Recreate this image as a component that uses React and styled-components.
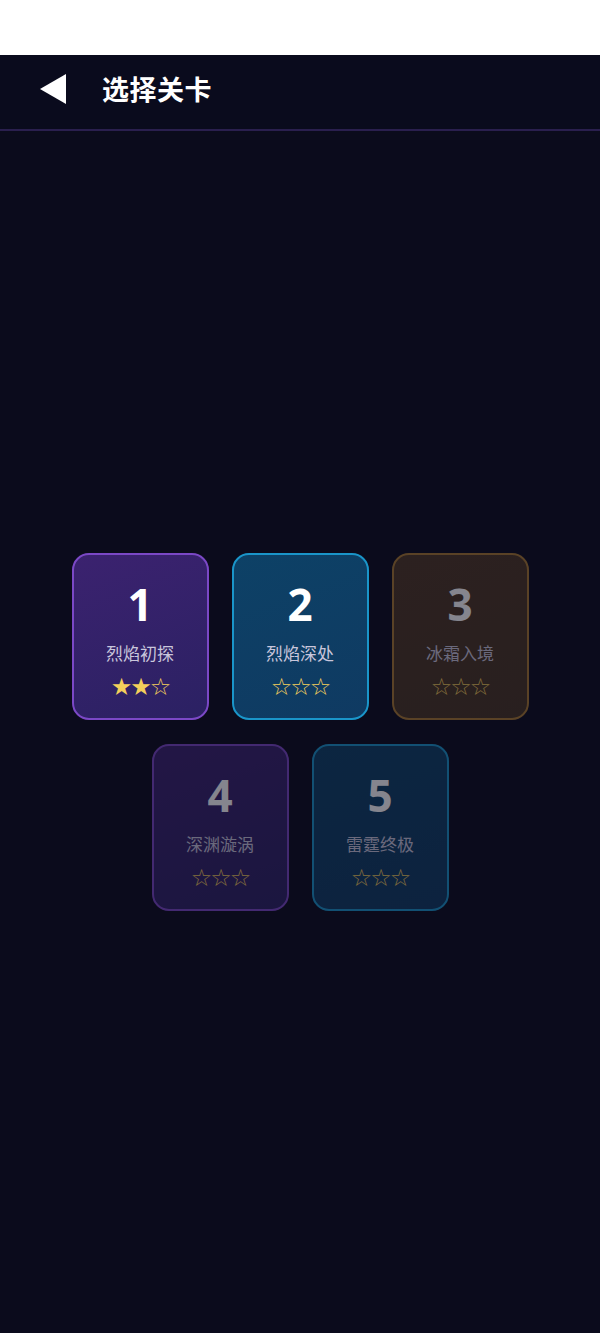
import React from 'react';
import styled, { createGlobalStyle } from 'styled-components';

const GlobalStyle = createGlobalStyle`
  html, body {
    margin: 0;
    padding: 0;
    background: #ffffff;
  }
  body {
    font-family: 'Noto Sans', 'Noto Sans CJK SC', sans-serif;
  }
`;

const Page = styled.div`
  padding-top: 55px;
  min-height: 1333px;
  box-sizing: border-box;
  display: flex;
  flex-direction: column;
`;

const Header = styled.div`
  height: 76px;
  box-sizing: border-box;
  display: flex;
  align-items: center;
  background: #0a0b1d;
  border-bottom: 2px solid #2a1f4e;
  padding: 0 0 8px 40px;
  gap: 36px;
`;

const BackIcon = styled.svg`
  width: 26px;
  height: 30px;
  display: block;
  margin-top: 2px;
`;

const Title = styled.h1`
  margin: 0;
  color: #ffffff;
  font-size: 27px;
  font-weight: 700;
  font-family: 'Noto Sans CJK SC', sans-serif;
  letter-spacing: 0.5px;
`;

const Main = styled.div`
  flex: 1;
  background: #0b0b1c;
  display: flex;
  align-items: center;
  justify-content: center;
`;

const Grid = styled.div`
  display: flex;
  flex-wrap: wrap;
  justify-content: center;
  width: 462px;
  column-gap: 23px;
  row-gap: 24px;
`;

const themes = {
  purple: { bg: 'linear-gradient(160deg, #3b226f 0%, #2b2163 100%)', border: '#7b48c6' },
  blue: { bg: 'linear-gradient(160deg, #0d4166 0%, #0f3a62 100%)', border: '#1a95c9' },
  brown: { bg: 'linear-gradient(160deg, #4e3724 0%, #463422 100%)', border: '#a87a30' },
};

const Card = styled.div`
  width: 137px;
  height: 167px;
  box-sizing: border-box;
  border-radius: 17px;
  border: 2.5px solid ${p => themes[p.$tone].border};
  background: ${p => themes[p.$tone].bg};
  opacity: ${p => (p.$locked ? 0.5 : 1)};
  display: flex;
  flex-direction: column;
  align-items: center;
  padding-top: 23px;
`;

const Num = styled.div`
  color: #ffffff;
  font-size: 44px;
  font-weight: 700;
  line-height: 52px;
  font-family: 'Noto Sans', 'Noto Sans CJK SC', sans-serif;
`;

const Name = styled.div`
  margin-top: 12px;
  color: #c9c6dc;
  font-size: 17px;
  line-height: 22px;
  font-family: 'Noto Sans CJK SC', sans-serif;
`;

const Stars = styled.div`
  margin-top: 10px;
  color: #f4cf5b;
  font-size: 24px;
  line-height: 26px;
  letter-spacing: -2px;
  font-family: 'DejaVu Sans', sans-serif;
`;

const levels = [
  { n: 1, name: '烈焰初探', tone: 'purple', stars: 2, locked: false },
  { n: 2, name: '烈焰深处', tone: 'blue', stars: 0, locked: false },
  { n: 3, name: '冰霜入境', tone: 'brown', stars: 0, locked: true },
  { n: 4, name: '深渊漩涡', tone: 'purple', stars: 0, locked: true },
  { n: 5, name: '雷霆终极', tone: 'blue', stars: 0, locked: true },
];

export default function App() {
  return (
    <>
      <GlobalStyle />
      <Page>
        <Header>
          <BackIcon viewBox="0 0 26 30">
            <path d="M0 15 L26 0 L26 30 Z" fill="#ffffff" />
          </BackIcon>
          <Title>选择关卡</Title>
        </Header>
        <Main>
          <Grid>
            {levels.map(l => (
              <Card key={l.n} $tone={l.tone} $locked={l.locked}>
                <Num>{l.n}</Num>
                <Name>{l.name}</Name>
                <Stars>{'★'.repeat(l.stars) + '☆'.repeat(3 - l.stars)}</Stars>
              </Card>
            ))}
          </Grid>
        </Main>
      </Page>
    </>
  );
}
